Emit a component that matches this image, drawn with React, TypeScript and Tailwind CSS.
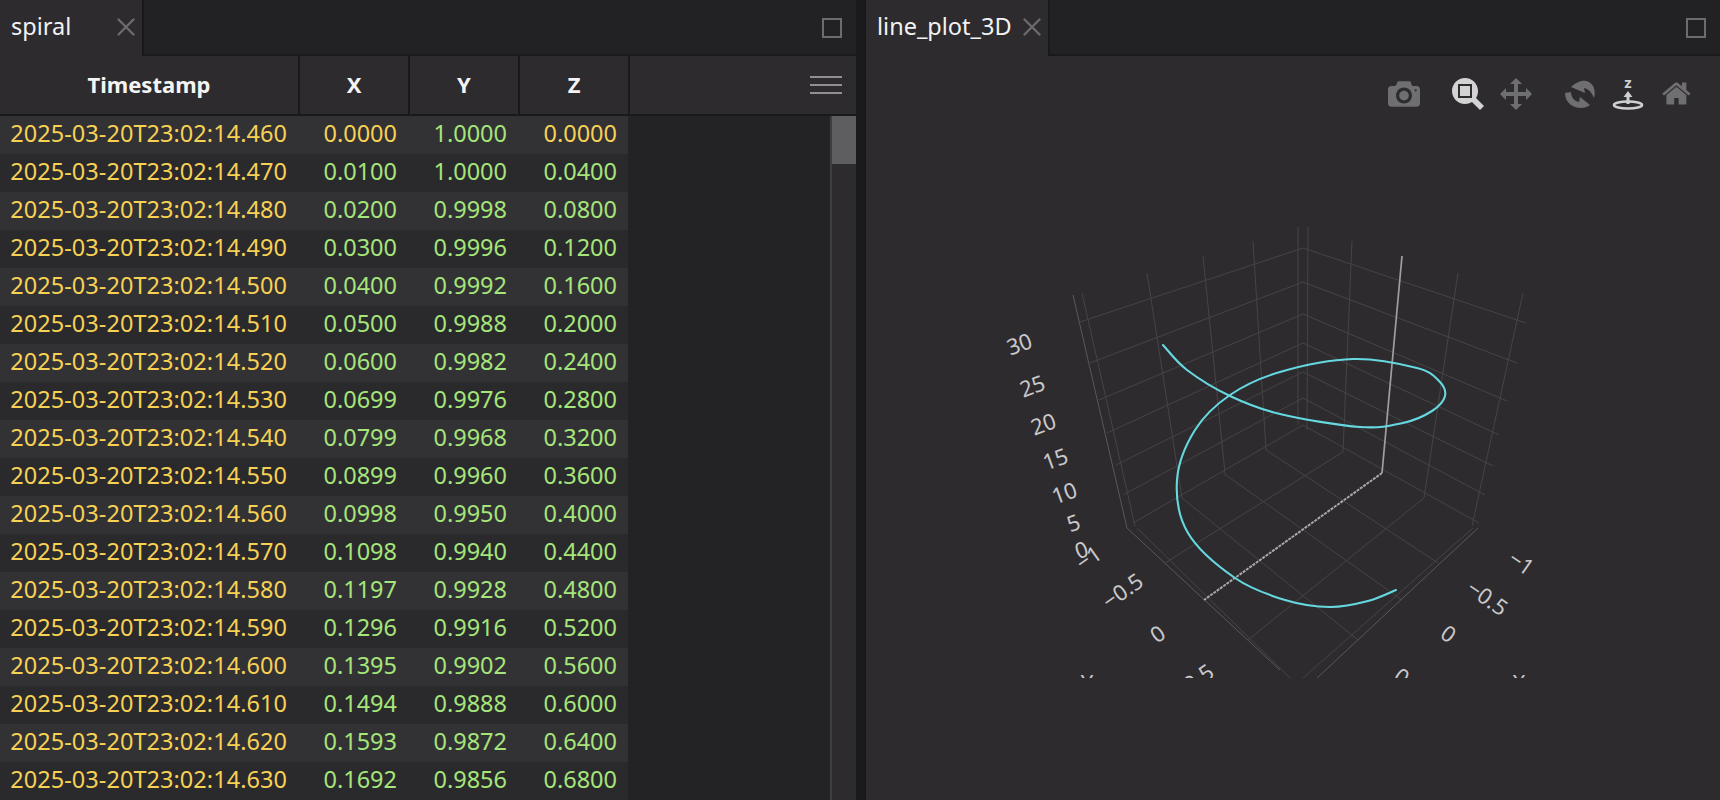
import { X } from "lucide-react";

const xs = ["0.0000","0.0100","0.0200","0.0300","0.0400","0.0500","0.0600","0.0699","0.0799","0.0899","0.0998","0.1098","0.1197","0.1296","0.1395","0.1494","0.1593","0.1692"];
const ys = ["1.0000","1.0000","0.9998","0.9996","0.9992","0.9988","0.9982","0.9976","0.9968","0.9960","0.9950","0.9940","0.9928","0.9916","0.9902","0.9888","0.9872","0.9856"];
const zs = ["0.0000","0.0400","0.0800","0.1200","0.1600","0.2000","0.2400","0.2800","0.3200","0.3600","0.4000","0.4400","0.4800","0.5200","0.5600","0.6000","0.6400","0.6800"];

const rows = xs.map((x, i) => ({
  time: `2025-03-20T23:02:14.${460 + i * 10}`,
  x,
  y: ys[i],
  z: zs[i],
}));

type Pt = [number, number];

// wall grid: left end, back corner, right end of each z level
const levels: [Pt, Pt, Pt][] = [
  [[1080, 322], [1303, 248], [1526, 323]],
  [[1090, 363], [1303, 282], [1517, 363]],
  [[1099, 400], [1303, 314], [1507, 401]],
  [[1107, 433], [1303, 343], [1499, 435]],
  [[1116, 465], [1303, 372], [1493, 466]],
  [[1123, 495], [1303, 398], [1485, 495]],
  [[1133, 523], [1303, 425], [1479, 523]],
];

const gridLines: [Pt, Pt][] = [
  // verticals
  [[1082, 293], [1135, 526]],
  [[1147, 273], [1182, 498]],
  [[1203, 256], [1225, 473]],
  [[1253, 241], [1266, 450]],
  [[1298, 227], [1298, 425]],
  [[1308, 227], [1307, 430]],
  [[1352, 241], [1343, 452]],
  [[1458, 273], [1424, 498]],
  [[1523, 293], [1472, 526]],
  // floor
  [[1266, 450], [1438, 563]],
  [[1223, 473], [1402, 600]],
  [[1182, 498], [1358, 640]],
  [[1137, 528], [1290, 678]],
  [[1343, 452], [1165, 563]],
  [[1424, 498], [1248, 640]],
  [[1473, 528], [1303, 678]],
];

const axisLines: [Pt, Pt][] = [
  [[1073, 295], [1127, 528]],
  [[1127, 528], [1280, 670]],
  [[1478, 528], [1317, 678]],
];

const spiral: Pt[] = [
  [1163, 345], [1187, 370], [1230, 396], [1280, 414], [1360, 427], [1403, 423], [1432, 411],
  [1445, 396], [1439, 381], [1417, 368], [1353, 359], [1280, 372], [1230, 395], [1195, 430], [1177, 480],
  [1188, 533], [1235, 578], [1285, 600], [1330, 607], [1368, 601], [1396, 590],
];

function smoothPath(pts: Pt[]) {
  let d = `M${pts[0][0]} ${pts[0][1]}`;
  for (let i = 0; i < pts.length - 1; i++) {
    const p0 = pts[Math.max(i - 1, 0)];
    const p1 = pts[i];
    const p2 = pts[i + 1];
    const p3 = pts[Math.min(i + 2, pts.length - 1)];
    const c1x = p1[0] + (p2[0] - p0[0]) / 6;
    const c1y = p1[1] + (p2[1] - p0[1]) / 6;
    const c2x = p2[0] - (p3[0] - p1[0]) / 6;
    const c2y = p2[1] - (p3[1] - p1[1]) / 6;
    d += ` C${c1x} ${c1y} ${c2x} ${c2y} ${p2[0]} ${p2[1]}`;
  }
  return d;
}

const labels: { t: string; x: number; y: number; r: number }[] = [
  { t: "30", x: 1019, y: 343, r: -20 },
  { t: "25", x: 1032, y: 385, r: -20 },
  { t: "20", x: 1043, y: 423, r: -20 },
  { t: "15", x: 1055, y: 458, r: -20 },
  { t: "10", x: 1064, y: 492, r: -20 },
  { t: "5", x: 1073, y: 522, r: -20 },
  { t: "0", x: 1081, y: 549, r: -20 },
  { t: "−1", x: 1088, y: 557, r: -35 },
  { t: "−0.5", x: 1122, y: 590, r: -35 },
  { t: "0", x: 1157, y: 633, r: -35 },
  { t: "0.5", x: 1198, y: 677, r: -35 },
  { t: "Y", x: 1087, y: 682, r: 0 },
  { t: "−1", x: 1522, y: 562, r: 35 },
  { t: "−0.5", x: 1488, y: 597, r: 35 },
  { t: "0", x: 1449, y: 633, r: 35 },
  { t: "0.5", x: 1410, y: 681, r: 35 },
  { t: "X", x: 1519, y: 682, r: 0 },
];

function Plot() {
  return (
    <svg viewBox="866 56 854 622" width={854} height={622} className="block">
      {levels.map(([a, b, c], i) => (
        <polyline
          key={i}
          points={`${a[0]},${a[1]} ${b[0]},${b[1]} ${c[0]},${c[1]}`}
          fill="none"
          stroke="#454447"
          strokeWidth={1}
        />
      ))}
      {gridLines.map(([a, b], i) => (
        <line key={i} x1={a[0]} y1={a[1]} x2={b[0]} y2={b[1]} stroke="#454447" strokeWidth={1} />
      ))}
      {axisLines.map(([a, b], i) => (
        <line key={i} x1={a[0]} y1={a[1]} x2={b[0]} y2={b[1]} stroke="#59585b" strokeWidth={1} />
      ))}
      <path d="M1402 256L1382 473" fill="none" stroke="#a09fa2" strokeWidth={1.7} />
      <path d="M1382 473L1204 600" fill="none" stroke="#a9a8aa" strokeWidth={2} strokeDasharray="3 1" />
      <path d={smoothPath(spiral)} fill="none" stroke="#66d9e0" strokeWidth={2.1} strokeLinecap="round" />
      {labels.map((l, i) => (
        <text
          key={i}
          x={l.x}
          y={l.y}
          textAnchor="middle"
          dominantBaseline="central"
          transform={`rotate(${l.r} ${l.x} ${l.y})`}
          fill="#c9c8ca"
          fontSize={22}
          fontFamily="'Noto Sans', sans-serif"
        >
          {l.t}
        </text>
      ))}
    </svg>
  );
}

function Modebar() {
  return (
    <div className="absolute inset-0 pointer-events-none">
      <svg viewBox="866 56 854 60" width={854} height={60} className="block">
        {/* camera */}
        <g fill="#6f6e71" transform="translate(1388 78) scale(0.032)">
          <path
            transform="matrix(1 0 0 -1 0 850)"
            d="m500 450c-83 0-150-67-150-150 0-83 67-150 150-150 83 0 150 67 150 150 0 83-67 150-150 150z m400 150h-120c-16 0-34 13-39 29l-31 93c-6 15-23 28-40 28h-340c-16 0-34-13-39-28l-31-94c-5-15-23-28-39-28h-121c-55 0-100-45-100-100v-450c0-55 45-100 100-100h800c55 0 100 45 100 100v450c0 55-45 100-100 100z m-400-550c-138 0-250 112-250 250 0 138 112 250 250 250 138 0 250-112 250-250 0-138-112-250-250-250z m365 380c-19 0-35 16-35 35 0 19 16 35 35 35 19 0 35-16 35-35 0-19-16-35-35-35z"
          />
        </g>
        {/* zoom, active */}
        <g fill="#d3d3d4" transform="translate(1452 78) scale(0.032)">
          <path
            transform="matrix(1 0 0 -1 0 850)"
            d="m1000-25l-250 251c40 63 63 138 63 218 0 224-182 406-407 406-224 0-406-182-406-406s183-406 407-406c80 0 155 22 218 62l250-250 125 125z m-812 250l0 438 437 0 0-438-437 0z m62 375l313 0 0-312-313 0 0 312z"
          />
        </g>
        {/* pan */}
        <g fill="#6f6e71" transform="translate(1500 78) scale(0.032)">
          <path
            transform="matrix(1 0 0 -1 0 850)"
            d="m1000 350l-187 188 0-125-250 0 0 250 125 0-188 187-187-187 125 0 0-250-250 0 0 125-188-188 186-187 0 125 252 0 0-250-125 0 187-188 188 188-125 0 0 250 250 0 0-126 187 188z"
          />
        </g>
        {/* orbit */}
        <g fill="#6f6e71" transform="translate(1580 94)">
          <path d="M-9 -7C-4 -12 4 -15 9 -12C14 -9 16 -3 14 4C12 -1 9 -5 4 -6L5 -1L-9 -7Z" />
          <path d="M-15 -1L-9 -2C-9 3 -6 7 -1 8L0 3L10 11C5 15 -3 15 -9 11C-13 8 -15 4 -15 -1Z" />
        </g>
        {/* turntable */}
        <g transform="translate(1628 94)">
          <text
            x={0}
            y={-6}
            textAnchor="middle"
            fill="#cfcfd0"
            fontSize={15}
            fontWeight={700}
            fontFamily="'Noto Sans', sans-serif"
          >
            z
          </text>
          <path d="M0 -3L-4.500 3H-1.500V10H1.500V3H4.500Z" fill="#cfcfd0" />
          <ellipse cx={0} cy={11} rx={14} ry={3.5} fill="none" stroke="#cfcfd0" strokeWidth={2.6} />
        </g>
        {/* home */}
        <g fill="#6f6e71" transform="translate(1662 78) scale(0.031)">
          <path
            transform="matrix(1 0 0 -1 0 850)"
            d="m786 296v-267q0-15-11-26t-25-10h-214v214h-143v-214h-214q-15 0-25 10t-11 26v267q0 1 0 2t0 2l321 264 321-264q1-1 1-4z m124 39l-34-41q-5-5-12-6h-2q-7 0-12 3l-386 322-386-322q-7-4-13-4-7 2-12 7l-35 41q-4 5-3 13t6 12l401 334q18 15 42 15t43-15l136-114v109q0 8 5 13t13 5h107q8 0 13-5t5-13v-227l122-102q5-5 6-12t-4-13z"
          />
        </g>
      </svg>
    </div>
  );
}

function TabStrip({ title, tabWidth }: { title: string; tabWidth: string }) {
  return (
    <div className="flex h-[56px] shrink-0 items-start justify-between bg-[#222224] border-b-2 border-[#1a1a1c]">
      <div className={`${tabWidth} -mb-[2px] flex h-[56px] items-center justify-between border-r-2 border-[#1a1a1c] bg-[#2d2b2e] pb-[2px] pl-[11px] pr-[1px]`}>
        <span className="text-[23.5px] text-[#f2f2f2]">{title}</span>
        <X size={30} strokeWidth={1.9} className="text-[#6c6b6e]" />
      </div>
      <div className="mr-[14px] mt-[18px] h-[20px] w-[20px] border-2 border-[#6c6b6e]" />
    </div>
  );
}

function Cell({ width, value, color }: { width: string; value: string; color: string }) {
  return <div className={`${width} shrink-0 pr-[11px] pb-[2px] text-right ${color}`}>{value}</div>;
}

function HeadCell({ width, label }: { width: string; label: string }) {
  return (
    <div className={`${width} flex shrink-0 items-center justify-center border-r-2 border-[#1a1a1c] pb-[2px] text-[22px] font-bold text-[#f4f4f4]`}>
      {label}
    </div>
  );
}

function zeroOr(value: string) {
  return value === "0.0000" ? "text-[#f7d154]" : "text-[#a5e57a]";
}

export default function App() {
  return (
    <div
      className="flex h-[800px] w-[1720px] overflow-hidden bg-[#1a1a1c]"
      style={{ fontFamily: "'Noto Sans', sans-serif" }}
    >
      <div className="flex h-full w-[856px] shrink-0 flex-col">
        <TabStrip title="spiral" tabWidth="w-[144px]" />
        <div className="flex h-[60px] shrink-0 border-b-2 border-[#1a1a1c] bg-[#2d2b2e]">
          <HeadCell width="w-[300px]" label="Timestamp" />
          <HeadCell width="w-[110px]" label="X" />
          <HeadCell width="w-[110px]" label="Y" />
          <HeadCell width="w-[110px]" label="Z" />
          <div className="ml-auto mr-[14px] flex w-[32px] flex-col justify-center gap-[6px]">
            <div className="h-[2px] bg-[#908f91]" />
            <div className="h-[2px] bg-[#908f91]" />
            <div className="h-[2px] bg-[#908f91]" />
          </div>
        </div>
        <div className="flex min-h-0 flex-1 bg-[#232325]">
          <div className="w-[628px] shrink-0">
            {rows.map((row, i) => (
              <div
                key={row.time}
                className={`flex h-[38px] items-center text-[23.5px] ${i % 2 === 0 ? "bg-[#323134]" : "bg-[#2a292c]"}`}
              >
                <Cell width="w-[298px] tracking-[0.05px]" value={row.time} color="text-[#f7d154]" />
                <Cell width="w-[110px]" value={row.x} color={zeroOr(row.x)} />
                <Cell width="w-[110px]" value={row.y} color={zeroOr(row.y)} />
                <Cell width="w-[110px]" value={row.z} color={zeroOr(row.z)} />
              </div>
            ))}
          </div>
          <div className="ml-auto w-[26px] border-l-2 border-[#3e3d40] bg-[#2d2b2e]">
            <div className="h-[48px] bg-[#5e5d60]" />
          </div>
        </div>
      </div>
      <div className="ml-[10px] flex h-full min-w-0 flex-1 flex-col">
        <TabStrip title="line_plot_3D" tabWidth="w-[184px]" />
        <div className="relative flex-1 bg-[#2d2b2e]">
          <Plot />
          <Modebar />
        </div>
      </div>
    </div>
  );
}
